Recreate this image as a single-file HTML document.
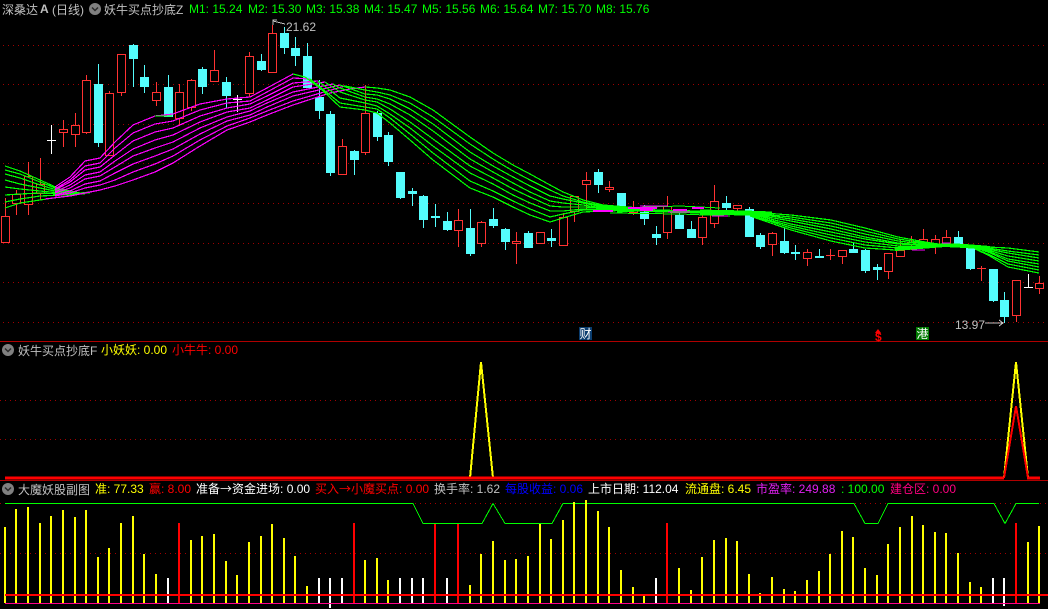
<!DOCTYPE html>
<html>
<head>
<meta charset="utf-8">
<style>
html,body{margin:0;padding:0;background:#000;width:1048px;height:609px;overflow:hidden}
svg{display:block}
text{font-family:"Liberation Sans","WenQuanYi Zen Hei","Noto Sans CJK SC",sans-serif;font-size:12px;white-space:pre}
tspan.a{font-family:"Noto Sans CJK SC",sans-serif}
</style>
</head>
<body>
<svg width="1048" height="609" viewBox="0 0 1048 609" xmlns="http://www.w3.org/2000/svg">
<rect width="1048" height="609" fill="#000"/>

<!-- dotted grid -->
<g stroke="#a00000" stroke-width="1" stroke-dasharray="1 4" fill="none" shape-rendering="crispEdges">
<path d="M3 45.5H1048M3 84.5H1048M3 124.5H1048M3 163.5H1048M3 203.5H1048M3 243.5H1048M3 282.5H1048M3 322.5H1048"/>
<path d="M0 400.5H1048M0 439.5H1048"/>
<path d="M0 503.5H1048M0 553.5H1048"/>
</g>

<!-- separators -->
<path d="M0 341.5H1048M0 480.5H1048" stroke="#b00000" stroke-width="1" shape-rendering="crispEdges"/>

<!-- candle wicks -->
<g shape-rendering="crispEdges" fill="none" stroke-width="1">
<path stroke="#ff3232" d="M5.5 198V216M16.5 190V215M28.5 162V215M40.5 158V200M63.5 120V147M75.5 113V147M86.5 75V134M109.5 91V156M121.5 54V96M156.5 82V106M179.5 84V126M191.5 79V111M214.5 50V81M249.5 52V97M272.5 25V73M342.5 139V175M365.5 85V155M458.5 209V247M481.5 221V247M516.5 232V264M563.5 213V246M574.5 196V222M586.5 172V210M609.5 181V192M633.5 201V215M667.5 196V239M702.5 215V245M714.5 185V228M737.5 205V214M772.5 232V256M807.5 249V266M830.5 249V260M842.5 250V264M888.5 253V279M900.5 239V257M911.5 236V250M923.5 229V246M935.5 235V254M946.5 230V245M981.5 266V281M1016.5 280V322M1039.5 276V294M826 255.5H835M977 268.5H986"/>
<path stroke="#54fcfc" d="M98.5 64V147M133.5 44V87M144.5 65V93M168.5 75V117M202.5 67V94M226.5 77V108M261.5 54V71M284.5 27V54M295.5 37V66M307.5 43V88M319.5 80V119M330.5 111V176M354.5 150V175M377.5 111V141M388.5 132V166M400.5 172V199M412.5 188V206M423.5 195V228M435.5 204V227M447.5 212V231M470.5 209V256M493.5 208V228M505.5 228V250M528.5 231V248M551.5 229V247M598.5 169V193M621.5 193V212M644.5 205V225M656.5 226V245M679.5 212V229M691.5 221V238M726.5 196V211M749.5 207V237M760.5 233V249M784.5 227V254M795.5 245V260M819.5 249V257M853.5 242V253M865.5 249V273M877.5 264V280M958.5 231V245M970.5 245V270M993.5 269V302M1004.5 292V323"/>
<path stroke="#fff" d="M51.5 125V154M47 140.5H56M237.5 95V112M233 99.5H242M1028.5 274V288M1024 287.5H1033"/>
</g>

<!-- red hollow bodies -->
<path shape-rendering="crispEdges" fill="#000" stroke="#ff3232" stroke-width="1" d="M1.5 216.5h8v26h-8zM12.5 194.5h8v9h-8zM24.5 176.5h8v28h-8zM36.5 184.5h8v9h-8zM59.5 129.5h8v3h-8zM71.5 125.5h8v9h-8zM82.5 80.5h8v52h-8zM105.5 93.5h8v62h-8zM117.5 54.5h8v38h-8zM152.5 92.5h8v8h-8zM175.5 92.5h8v26h-8zM187.5 80.5h8v27h-8zM210.5 70.5h8v11h-8zM245.5 56.5h8v37h-8zM268.5 33.5h8v39h-8zM338.5 146.5h8v28h-8zM361.5 113.5h8v39h-8zM454.5 220.5h8v10h-8zM477.5 222.5h8v21h-8zM512.5 241.5h8v2h-8zM536.5 232.5h8v11h-8zM559.5 217.5h8v28h-8zM570.5 196.5h8v15h-8zM582.5 180.5h8v4h-8zM605.5 187.5h8v2h-8zM629.5 209.5h8v3h-8zM663.5 206.5h8v26h-8zM698.5 217.5h8v20h-8zM710.5 201.5h8v22h-8zM733.5 205.5h8v3h-8zM768.5 233.5h8v11h-8zM803.5 252.5h8v6h-8zM838.5 250.5h8v6h-8zM884.5 253.5h8v18h-8zM896.5 250.5h8v6h-8zM907.5 242.5h8v2h-8zM919.5 239.5h8v6h-8zM931.5 239.5h8v5h-8zM942.5 237.5h8v7h-8zM1012.5 280.5h8v35h-8zM1035.5 283.5h8v5h-8z"/>

<!-- cyan bodies -->
<path shape-rendering="crispEdges" fill="#54fcfc" d="M94 84h9v59h-9zM129 45h9v14h-9zM140 77h9v10h-9zM164 87h9v30h-9zM198 69h9v18h-9zM222 82h9v14h-9zM257 61h9v9h-9zM280 33h9v15h-9zM291 48h9v8h-9zM303 56h9v32h-9zM315 97h9v14h-9zM326 114h9v59h-9zM350 151h9v9h-9zM373 113h9v24h-9zM384 135h9v27h-9zM396 172h9v26h-9zM408 191h9v3h-9zM419 196h9v24h-9zM431 216h9v2h-9zM443 221h9v9h-9zM466 228h9v26h-9zM489 219h9v7h-9zM501 229h9v13h-9zM524 233h9v15h-9zM547 238h9v3h-9zM594 172h9v13h-9zM617 193h9v17h-9zM640 212h9v7h-9zM652 234h9v4h-9zM675 215h9v14h-9zM687 229h9v9h-9zM722 203h9v5h-9zM745 209h9v28h-9zM756 235h9v12h-9zM780 241h9v12h-9zM791 252h9v2h-9zM815 256h9v2h-9zM849 249h9v4h-9zM861 250h9v21h-9zM873 267h9v3h-9zM954 237h9v8h-9zM966 248h9v21h-9zM989 269h9v32h-9zM1000 300h9v17h-9z"/>

<!-- MA bundle: green section A -->
<g fill="none" stroke="#00ff00" stroke-width="1.2" shape-rendering="crispEdges">
<polyline points="5,166 20,171 40,180 60,189 80,193"/>
<polyline points="5,170 20,174 40,182 60,190 80,193"/>
<polyline points="5,174 20,178 40,185 60,191 80,193"/>
<polyline points="5,180 20,184 40,188 60,192 85,194"/>
<polyline points="5,187 20,189 40,191 60,193 85,194"/>
<polyline points="5,195 20,194 40,193 60,194 90,193"/>
<polyline points="5,202 20,199 40,196 60,195 90,192"/>
<polyline points="5,208 20,203 40,200 60,197 95,191"/>
</g>

<!-- MA bundle: magenta rising -->
<g fill="none" stroke="#ff00ff" stroke-width="1.2" shape-rendering="crispEdges">
<polyline points="55,187 70,177 85,161 100,158 115,142 133,125 155,116 173,114 200,104 227,99 250,97 267,88 293,74"/>
<polyline points="55,189 70,180 85,166 100,163 115,148 133,133 155,124 173,121 200,110 227,103 250,101 267,92 293,78 310,79"/>
<polyline points="55,190 70,182 85,170 100,167 115,155 133,141 155,132 173,128 200,116 227,108 250,104 267,96 293,83 318,81"/>
<polyline points="55,192 70,185 85,175 100,172 115,161 133,149 155,140 173,135 200,122 227,112 250,108 267,100 293,87 325,82"/>
<polyline points="55,193 70,188 85,179 100,176 115,167 133,156 155,148 173,142 200,128 227,117 250,111 267,103 293,92 333,84"/>
<polyline points="55,195 70,191 85,184 100,181 115,173 133,164 155,156 173,149 200,134 227,121 250,115 267,107 293,96 340,85"/>
<polyline points="55,196 70,193 85,188 100,185 115,180 133,172 155,164 173,156 200,140 227,126 250,118 267,111 293,101 345,86"/>
<polyline points="45,199 70,196 85,193 100,190 115,186 133,180 155,172 173,163 200,146 227,130 250,122 267,115 293,105 330,93 350,89 365,87"/>
</g>
<path d="M155 116H172" stroke="#00ff00" stroke-width="1" fill="none" shape-rendering="crispEdges"/>

<!-- MA bundle: green falling -->
<g fill="none" stroke="#00ff00" stroke-width="1.2" shape-rendering="crispEdges">
<polyline points="365,87 377,88 390,90 410,97 433,110 470,137 493,153 513,165 530,174 550,185 563,192 583,200 603,205 640,208"/>
<polyline points="345,86 365,90 377,92 390,95 410,103 433,117 470,144 493,159 513,171 530,180 550,190 563,196 583,202 603,206 640,208"/>
<polyline points="340,85 365,94 377,95 390,99 410,109 433,124 470,152 493,166 513,177 530,186 550,196 563,199 583,203 603,207 640,209"/>
<polyline points="333,84 340,88 365,97 377,99 390,104 410,115 433,131 470,159 493,172 513,183 530,192 550,201 563,203 583,205 603,208 640,209"/>
<polyline points="325,82 340,92 365,100 377,102 390,109 410,122 433,139 470,166 493,178 513,189 530,197 550,206 563,207 583,207 603,208 640,209"/>
<polyline points="318,81 340,98 365,103 377,106 390,114 410,128 433,146 470,173 493,184 513,195 530,203 550,211 563,211 583,209 603,209 640,209"/>
<polyline points="310,79 340,103 365,107 377,109 390,118 410,134 433,153 470,181 493,191 513,201 530,209 550,217 563,214 583,210 603,210 640,210"/>
<polyline points="293,74 305,77 320,88 340,107 365,110 377,113 390,123 410,140 433,160 470,188 493,197 513,207 530,215 550,222 563,218 583,212 603,211 640,210"/>
</g>

<!-- middle convergence band -->
<g fill="none" shape-rendering="crispEdges">
<path d="M620 208L680 206 720 208M610 213L680 214 730 216" stroke="#00ff00" stroke-width="1"/>
<polyline points="617,211 640,210 660,211 700,212 730,212" stroke="#00ff00" stroke-width="3"/>
<polyline points="700,212 745,213 772,214" stroke="#00ff00" stroke-width="5"/>
<path d="M593 211H613M628 208H657M640 210H653M673 210H687M692 208H704" stroke="#ff00ff" stroke-width="2"/>
<path d="M640 206H668M668 212H690M712 216H728" stroke="#ff00ff" stroke-width="1"/>
</g>

<!-- MA bundle: falling fan 2 -->
<g fill="none" stroke="#00ff00" stroke-width="1.2" shape-rendering="crispEdges">
<polyline points="750,212 791,215 831,220 865,228 898,237 925,242 945,245"/>
<polyline points="750,213 791,217 831,223 865,231 898,239 925,243 945,245"/>
<polyline points="750,213 791,219 831,226 865,234 898,241 925,244 945,245"/>
<polyline points="750,214 791,221 831,229 865,237 898,243 925,245 945,246"/>
<polyline points="750,214 791,224 831,232 865,239 898,244 925,245 945,246"/>
<polyline points="750,215 791,226 831,235 865,242 898,246 925,246 945,246"/>
<polyline points="750,215 791,228 831,238 865,245 898,248 925,247 945,246"/>
<polyline points="750,216 791,230 831,241 865,248 895,250 925,248 945,246"/>
<polyline points="895,249 920,247 945,245 965,246 990,248" stroke-width="4"/>
<path d="M912 250H925M942 243H950" stroke="#ff00ff" stroke-width="1"/>
<polyline points="975,247 988,247 1008,248 1039,252"/>
<polyline points="975,247 988,248 1008,251 1039,255"/>
<polyline points="975,248 988,249 1008,253 1039,258"/>
<polyline points="975,248 988,250 1008,256 1039,261"/>
<polyline points="975,248 988,251 1008,259 1039,264"/>
<polyline points="975,248 988,252 1008,261 1039,267"/>
<polyline points="975,249 988,254 1008,264 1039,270"/>
<polyline points="975,249 988,255 1008,267 1039,273"/>
</g>

<!-- high / low markers -->
<g fill="none" stroke="#c0c0c0" stroke-width="1" shape-rendering="crispEdges">
<path d="M273 25V20H277M273 21L285 24"/>
<path d="M985 323H1003M999 320L1003 323 999 326"/>
</g>
<text x="286" y="31" fill="#c0c0c0">21.62</text>
<text x="955" y="329" fill="#c0c0c0">13.97</text>

<!-- event tags -->
<rect x="579" y="327" width="13" height="13" fill="#0a3c6e"/>
<text x="579.5" y="338" fill="#fff">财</text>
<rect x="916" y="327" width="13" height="13" fill="#007a00"/>
<text x="916.5" y="338" fill="#fff">港</text>
<path d="M875 333L878 329 881 333Z" fill="#ff0000"/>
<text x="875" y="341" fill="#ff0000" font-weight="bold">$</text>

<!-- panel 2 chart -->
<g fill="none" shape-rendering="crispEdges">
<polyline points="470,478 481,362 493,478" stroke="#ffff00" stroke-width="2"/>
<polyline points="1004,478 1016,362 1028,478" stroke="#ffff00" stroke-width="2"/>
<polyline points="1004,478 1016,406 1028,478" stroke="#ff0000" stroke-width="2"/>
<path d="M5 478H1004M1027 478H1040" stroke="#ff0000" stroke-width="3"/>
</g>

<!-- panel 3 chart -->
<polyline fill="none" stroke="#00ff00" stroke-width="1" shape-rendering="crispEdges" points="5,503.5 413,503.5 423,523.5 482,523.5 493,503.5 505,523.5 552,523.5 563,503.5 854,503.5 865,523.5 878,523.5 888,503.5 994,503.5 1005,523.5 1016,503.5 1039,503.5"/>
<g fill="none" stroke-width="2" shape-rendering="crispEdges">
<path stroke="#ffff00" d="M5 527V603M16 509V603M28 507V603M40 523V603M51 516V603M63 510V603M75 517V603M86 510V603M98 557V603M109 548V603M121 523V603M133 516V603M144 554V603M156 574V603M191 540V603M202 536V603M214 534V603M226 561V603M237 575V603M249 542V603M261 536V603M272 524V603M284 538V603M295 556V603M307 586V603M365 560V603M377 558V603M388 580V603M470 585V603M481 554V603M493 541V603M505 560V603M516 559V603M528 556V603M540 524V603M551 539V603M563 520V603M574 502V603M586 500V603M598 511V603M609 527V603M621 570V603M633 587V603M644 596V603M679 568V603M691 590V603M702 557V603M714 540V603M726 538V603M737 541V603M749 574V603M760 593V603M772 577V603M784 589V603M795 591V603M807 580V603M819 571V603M830 554V603M842 531V603M853 537V603M865 568V603M877 575V603M888 544V603M900 527V603M912 516V603M923 525V603M935 532V603M946 533V603M958 553V603M970 582V603M981 587V603M1028 542V603M1039 526V603"/>
<path stroke="#fff" d="M168 578V603M319 578V603M330 578V608M342 578V603M400 578V603M412 578V603M423 578V603M447 578V603M656 578V603M993 578V603M1004 578V606"/>
<path stroke="#ff0000" d="M179 523V603M354 523V603M435 524V603M458 524V603M667 523V603M1016 523V603"/>
</g>
<path d="M5 595H1048" stroke="#ff0000" stroke-width="2" shape-rendering="crispEdges"/>
<path d="M5 603.5H1040" stroke="#ff0088" stroke-width="1" shape-rendering="crispEdges"/>

<!-- circle icons -->
<g>
<circle cx="95" cy="9" r="6" fill="#808080"/><path d="M92 7.5L95 10.5 98 7.5" fill="none" stroke="#2a2a2a" stroke-width="1.5"/>
<circle cx="8" cy="350" r="6" fill="#808080"/><path d="M5 348.5L8 351.5 11 348.5" fill="none" stroke="#2a2a2a" stroke-width="1.5"/>
<circle cx="8" cy="489" r="6" fill="#808080"/><path d="M5 487.5L8 490.5 11 487.5" fill="none" stroke="#2a2a2a" stroke-width="1.5"/>
</g>

<!-- header row 1 -->
<text x="2" y="14" fill="#c0c0c0">深桑达</text>
<text x="40" y="13" fill="#c0c0c0" font-weight="bold">A</text>
<text x="52" y="14" fill="#c0c0c0">(日线)</text>
<text x="104" y="14" fill="#c0c0c0">妖牛买点抄底Z</text>
<text x="189" y="13" fill="#00ff00">M1: 15.24</text>
<text x="248" y="13" fill="#00ff00">M2: 15.30</text>
<text x="306" y="13" fill="#00ff00">M3: 15.38</text>
<text x="364" y="13" fill="#00ff00">M4: 15.47</text>
<text x="422" y="13" fill="#00ff00">M5: 15.56</text>
<text x="480" y="13" fill="#00ff00">M6: 15.64</text>
<text x="538" y="13" fill="#00ff00">M7: 15.70</text>
<text x="596" y="13" fill="#00ff00">M8: 15.76</text>

<!-- header row 2 -->
<text x="18" y="355" fill="#c0c0c0">妖牛买点抄底F</text>
<text x="101" y="354" fill="#ffff00">小妖妖: 0.00</text>
<text x="172" y="354" fill="#ff0000">小牛牛: 0.00</text>

<!-- header row 3 -->
<text x="18" y="494" fill="#c0c0c0">大魔妖股副图</text>
<text x="95" y="493" fill="#ffff00">准: 77.33</text>
<text x="149" y="493" fill="#ff0000">赢: 8.00</text>
<text x="196" y="493" fill="#ffffff">准备<tspan class="a">→</tspan>资金进场: 0.00</text>
<text x="315" y="493" fill="#ff0000">买入<tspan class="a">→</tspan>小魔买点: 0.00</text>
<text x="434" y="493" fill="#c0c0c0">换手率: 1.62</text>
<text x="505" y="493" fill="#0000ff">每股收益: 0.06</text>
<text x="588" y="493" fill="#ffffff">上市日期: 112.04</text>
<text x="685" y="493" fill="#ffff00">流通盘: 6.45</text>
<text x="756" y="493" fill="#e020f0">市盈率: 249.88</text>
<text x="841" y="493" fill="#00ff00">: 100.00</text>
<text x="890" y="493" fill="#ff0080">建仓区: 0.00</text>
</svg>
</body>
</html>
